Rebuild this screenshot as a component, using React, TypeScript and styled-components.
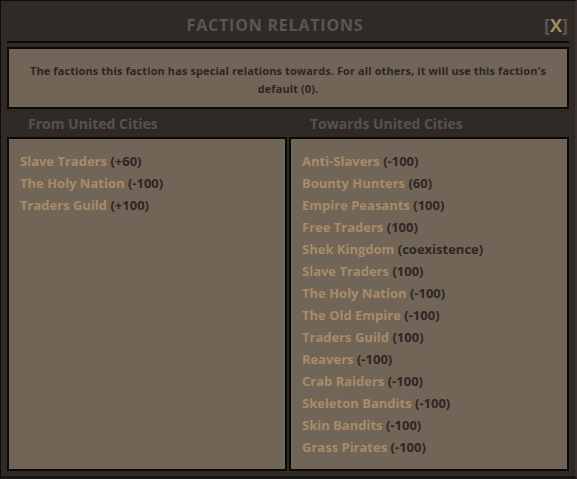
import React from "react";
import styled, { createGlobalStyle } from "styled-components";

const Global = createGlobalStyle`
  html, body { margin: 0; padding: 0; background: #1c1816; }
  * { box-sizing: border-box; }
`;

const FONT = `"Open Sans", Roboto, "Liberation Sans", sans-serif`;

const Window = styled.div`
  width: 577px;
  height: 479px;
  background: #302a27;
  border-top: 1px solid #0e0c0b;
  border-left: 1px solid #0e0c0b;
  border-right: 2px solid #3b3431;
  border-bottom: 3px solid #1a1614;
  padding: 0 6px 5px 6px;
  display: flex;
  flex-direction: column;
  font-family: ${FONT};
`;

const TitleBar = styled.div`
  height: 42px;
  display: flex;
  align-items: center;
  padding-top: 8px;
  border-bottom: 2px solid #0b0908;
`;

const Title = styled.h1`
  flex: 1;
  margin: 0;
  text-align: center;
  font-size: 16px;
  font-weight: 700;
  color: #5b5651;
  letter-spacing: 0.8px;
`;

const Close = styled.button`
  width: 25px;
  margin-right: 1px;
  background: none;
  border: none;
  padding: 0;
  font-family: ${FONT};
  font-size: 18px;
  font-weight: 700;
  color: #5d5854;
  cursor: pointer;
  line-height: 20px;
  text-align: right;
  white-space: nowrap;
`;

const CloseX = styled.span`
  color: #a68a62;
`;

const InfoBox = styled.div`
  margin-top: 4px;
  height: 62px;
  border: 2px solid #0b0908;
  background: #716558;
  padding-top: 13px;
  text-align: center;
  font-size: 11px;
  font-weight: 700;
  line-height: 18px;
  letter-spacing: 0.1px;
  color: #2e2521;
`;

const Columns = styled.div`
  flex: 1;
  display: grid;
  grid-template-columns: 1fr 1fr;
  grid-template-rows: 28px 1fr;
  column-gap: 2px;
`;

const ColHeader = styled.div`
  display: flex;
  align-items: center;
  padding-left: 21px;
  padding-top: 1px;
  font-size: 14px;
  font-weight: 700;
  color: #57524d;
`;

const Panel = styled.div`
  border: 2px solid #0b0908;
  background: #716558;
  padding: 11px 0 0 11px;
  display: flex;
  flex-direction: column;
`;

const Row = styled.div`
  height: 22px;
  line-height: 22px;
  font-size: 13px;
  font-weight: 700;
  white-space: nowrap;
`;

const Name = styled.span`
  color: #a78c68;
`;

const Value = styled.span`
  color: #2f2522;
`;

const from: [string, string][] = [
  ["Slave Traders", "(+60)"],
  ["The Holy Nation", "(-100)"],
  ["Traders Guild", "(+100)"],
];

const towards: [string, string][] = [
  ["Anti-Slavers", "(-100)"],
  ["Bounty Hunters", "(60)"],
  ["Empire Peasants", "(100)"],
  ["Free Traders", "(100)"],
  ["Shek Kingdom", "(coexistence)"],
  ["Slave Traders", "(100)"],
  ["The Holy Nation", "(-100)"],
  ["The Old Empire", "(-100)"],
  ["Traders Guild", "(100)"],
  ["Reavers", "(-100)"],
  ["Crab Raiders", "(-100)"],
  ["Skeleton Bandits", "(-100)"],
  ["Skin Bandits", "(-100)"],
  ["Grass Pirates", "(-100)"],
];

export default function App() {
  return (
    <>
      <Global />
      <Window>
        <TitleBar>
          <Title>FACTION RELATIONS</Title>
          <Close>
            [<CloseX>X</CloseX>]
          </Close>
        </TitleBar>
        <InfoBox>
          The factions this faction has special relations towards. For all others, it will use this faction's
          <br />
          default (0).
        </InfoBox>
        <Columns>
          <ColHeader>From United Cities</ColHeader>
          <ColHeader>Towards United Cities</ColHeader>
          <Panel>
            {from.map(([n, v]) => (
              <Row key={n}>
                <Name>{n}</Name> <Value>{v}</Value>
              </Row>
            ))}
          </Panel>
          <Panel>
            {towards.map(([n, v]) => (
              <Row key={n}>
                <Name>{n}</Name> <Value>{v}</Value>
              </Row>
            ))}
          </Panel>
        </Columns>
      </Window>
    </>
  );
}
